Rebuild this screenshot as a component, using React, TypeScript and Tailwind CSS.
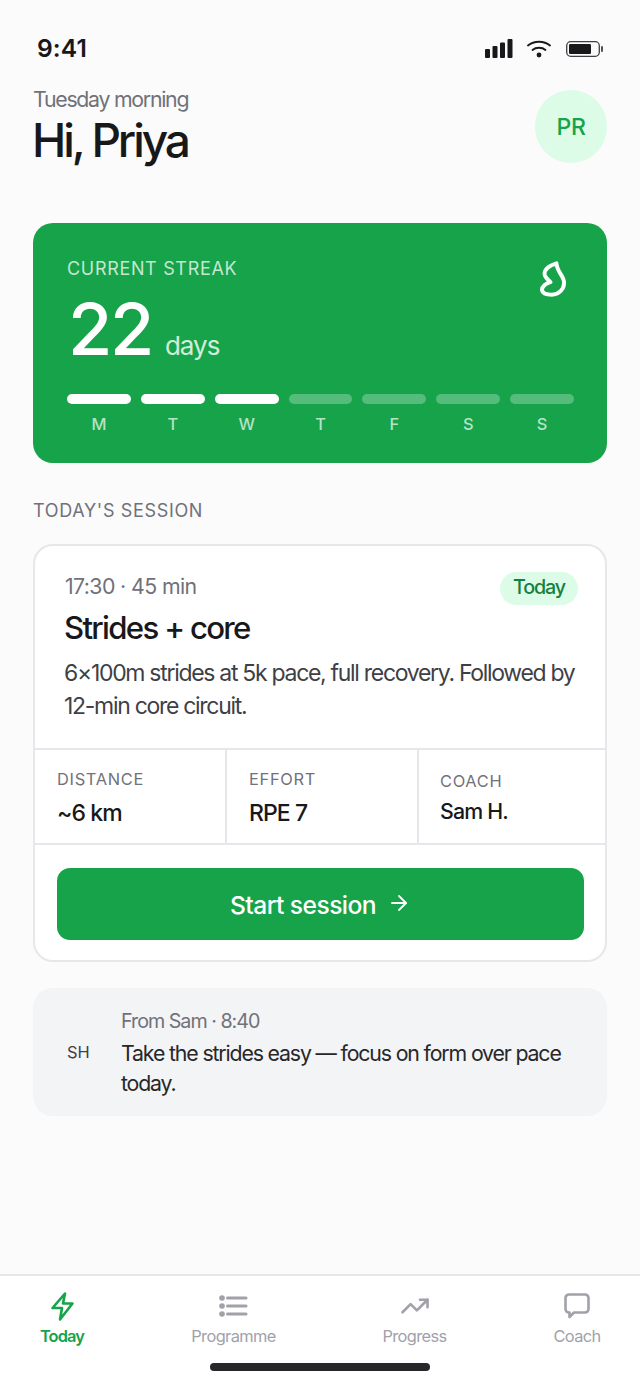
import { ArrowRight, TrendingUp } from "lucide-react";

const days = ["M", "T", "W", "T", "F", "S", "S"];

function Stat({ label, value, className, valueClass }: { label: string; value: string; className: string; valueClass: string }) {
  return (
    <div className={className}>
      <div className="text-[16.4px] leading-[20px] tracking-[0.7px] text-[#71717a]">{label}</div>
      <div className={valueClass}>{value}</div>
    </div>
  );
}

function Tab({ label, active, icon, className }: { label: string; active?: boolean; icon: React.ReactNode; className: string }) {
  return (
    <div className={`flex flex-col items-center ${className} ${active ? "text-[#16a34a]" : "text-[#a1a1aa]"}`}>
      <div className="flex h-[32px] items-center justify-center">{icon}</div>
      <div className={`mt-[4px] text-[16.4px] leading-[20px] whitespace-nowrap ${active ? "font-semibold tracking-[-0.9px]" : "font-normal tracking-[-0.6px]"}`}>{label}</div>
    </div>
  );
}

export default function App() {
  return (
    <div className="flex h-[1385px] w-[640px] flex-col overflow-hidden bg-[#fafbfa] font-['Inter',sans-serif]">
      <div className="flex h-[90px] items-start justify-between pt-[33px] pr-[37px] pl-[37px]">
        <span className="text-[24.6px] leading-[30px] font-semibold tracking-[0.1px] text-[#18181b]">9:41</span>
        <div className="mt-[6px] flex items-center">
          <svg width="28" height="19" viewBox="0 0 28 19" fill="#18181b">
            <rect x="0" y="10" width="5" height="9" rx="1" />
            <rect x="7.5" y="7" width="5" height="12" rx="1" />
            <rect x="15" y="3.5" width="5" height="15.5" rx="1" />
            <rect x="22.5" y="0" width="5" height="19" rx="1" />
          </svg>
          <svg width="24" height="18" viewBox="0 0 24 18" fill="none" stroke="#18181b" strokeWidth="1.8" strokeLinecap="round" className="ml-[14px]">
            <path d="M1 5.5C7 0.5 17 0.5 23 5.5" />
            <path d="M5.5 10C9 7 15 7 18.5 10" />
            <circle cx="12" cy="15" r="2.4" fill="#18181b" stroke="none" />
          </svg>
          <svg width="37" height="16" viewBox="0 0 37 16" fill="none" className="ml-[15px]">
            <rect x="0.7" y="0.7" width="32.6" height="14.6" rx="4" stroke="#3f3f46" strokeWidth="1.3" />
            <rect x="3" y="3" width="22" height="10" rx="1.2" fill="#18181b" />
            <rect x="35" y="5" width="2" height="6" rx="1" fill="#52525b" />
          </svg>
        </div>
      </div>

      <div className="flex h-[73px] items-center justify-between px-[33px]">
        <div className="-mt-[2px]">
          <div className="text-[21.3px] leading-[20px] tracking-[-1.27px] text-[#71717a]">Tuesday morning</div>
          <div className="mt-[8px] -ml-[1px] text-[46px] leading-[46px] font-medium tracking-[-3.05px] text-[#18181b]">Hi, Priya</div>
        </div>
        <div className="flex h-[73px] w-[72px] items-center justify-center rounded-full bg-[#dcfce7] pt-[1px] text-[23px] font-medium tracking-[-0.4px] text-[#16a34a]">PR</div>
      </div>

      <div className="mx-[33px] mt-[60px] h-[240px] rounded-[20px] bg-[#16a34a] pt-[36px] pr-[33px] pl-[34px]">
        <div className="flex items-start justify-between">
          <div>
            <div className="text-[18px] leading-[20px] tracking-[0.67px] text-white/75">CURRENT STREAK</div>
            <div className="mt-[18px] flex items-baseline">
              <span className="ml-[1px] text-[72px] leading-[64px] font-medium tracking-[-2.4px] text-white">22</span>
              <span className="ml-[13px] text-[26px] leading-[30px] tracking-[-1px] text-white/80">days</span>
            </div>
          </div>
          <svg width="33" height="42" viewBox="110 55 100 125" fill="none" stroke="white" strokeWidth="12" strokeLinecap="round" strokeLinejoin="round" className="-mt-[1px] mr-[4px]">
            <path d="M169 70C150 76 132 86 133 103C134 113 145 121 151 127C138 130 125 140 125 151C127 162 142 165 155 165C176 165 192 149 192 129C192 107 171 98 169 70Z" />
          </svg>
        </div>
        <div className="mt-[33px] grid grid-cols-7 gap-[10px]">
          {days.map((d, i) => (
            <div key={i} className="flex flex-col items-center">
              <div className={`h-[10px] w-full rounded-full ${i < 3 ? "bg-white" : "bg-white/[.27]"}`} />
              <div className="mt-[10px] text-[16.4px] leading-[20px] font-medium text-white/70">{d}</div>
            </div>
          ))}
        </div>
      </div>

      <div className="mx-[33px] mt-[38px] text-[18px] leading-[20px] tracking-[0.66px] text-[#71717a]">TODAY'S SESSION</div>

      <div className="mx-[33px] mt-[23px] h-[418px] rounded-[20px] border-2 border-[#e5e7eb] bg-white">
        <div className="h-[202px] pt-[25px] pr-[27px] pl-[29px]">
          <div className="flex items-center justify-between">
            <span className="mb-[4px] ml-[1px] text-[21.3px] leading-[30px] tracking-[-0.6px] text-[#71717a]">17:30 · 45 min</span>
            <span className="flex h-[33px] w-[78px] items-center justify-center rounded-full bg-[#dcfce7] text-[19.7px] font-medium tracking-[-1.1px] text-[#15803d]">Today</span>
          </div>
          <div className="mt-[3px] text-[31.2px] leading-[40px] font-medium tracking-[-1.7px] text-[#18181b]">Strides + core</div>
          <div className="mt-[9px] w-[530px] text-[23px] leading-[33px] tracking-[-1.3px] text-[#3f3f46]">6×100m strides at 5k pace, full recovery. Followed by 12-min core circuit.</div>
        </div>
        <div className="flex h-[97px] border-y-2 border-[#e5e7eb]">
          <Stat label="DISTANCE" value="~6 km" className="w-[192px] border-r-2 border-[#e5e7eb] pt-[19px] pl-[22px]" valueClass="mt-[10px] text-[23px] leading-[28px] font-[450] tracking-[-0.9px] text-[#18181b]" />
          <Stat label="EFFORT" value="RPE 7" className="w-[192px] border-r-2 border-[#e5e7eb] pt-[19px] pl-[22px]" valueClass="mt-[10px] text-[23px] leading-[28px] font-[450] tracking-[-0.9px] text-[#18181b]" />
          <Stat label="COACH" value="Sam H." className="flex-1 pt-[21px] pl-[21px]" valueClass="mt-[6px] text-[21.3px] leading-[28px] font-[450] tracking-[-0.8px] text-[#18181b]" />
        </div>
        <div className="pt-[23px] pr-[21px] pl-[22px]">
          <div className="flex h-[72px] items-center justify-center gap-[11px] rounded-[13px] bg-[#16a34a] pt-[2px] text-[24.6px] font-medium tracking-[-0.55px] text-white">
            Start session
            <ArrowRight size={24} strokeWidth={1.8} className="-mt-[4px]" />
          </div>
        </div>
      </div>

      <div className="mx-[33px] mt-[26px] flex h-[128px] items-center rounded-[20px] bg-[#f3f4f6] pr-[30px] pl-[34px]">
        <div className="w-[54px] shrink-0 text-[16.4px] text-[#3f3f46]">SH</div>
        <div className="pt-[1px]">
          <div className="text-[19.7px] leading-[28px] tracking-[-1px] text-[#71717a]">From Sam · 8:40</div>
          <div className="mt-[3px] text-[21.3px] leading-[30px] tracking-[-1.15px] text-[#27272a]">Take the strides easy — focus on form over pace today.</div>
        </div>
      </div>

      <div className="mt-auto h-[111px] border-t-2 border-[#e5e7eb] bg-white">
        <div className="flex pt-[14px]">
          <Tab
            label="Today"
            active
            className="ml-[40px] w-[44px]"
            icon={
              <svg width="25" height="32" viewBox="0 0 25 32" fill="none" stroke="currentColor" strokeWidth="2.6" strokeLinejoin="round">
                <path d="M15 3.5 2.5 18H12l-2 11.5L22.5 13.5H13Z" />
              </svg>
            }
          />
          <Tab
            label="Programme"
            className="ml-[108px] w-[83px]"
            icon={
              <svg width="30" height="24" viewBox="0 0 30 24" fill="currentColor" stroke="none">
                <circle cx="3" cy="4" r="2.8" />
                <circle cx="3" cy="12" r="2.8" />
                <circle cx="3" cy="20" r="2.8" />
                <rect x="7" y="2.5" width="21.5" height="3" rx="1.5" />
                <rect x="7" y="10.5" width="21.5" height="3" rx="1.5" />
                <rect x="7" y="18.5" width="21.5" height="3" rx="1.5" />
              </svg>
            }
          />
          <Tab label="Progress" className="ml-[108px] w-[63px]" icon={<TrendingUp size={30} strokeWidth={2.1} />} />
          <Tab
            label="Coach"
            className="ml-[108px] w-[46px]"
            icon={
              <svg width="26" height="26" viewBox="0 0 26 26" fill="none" stroke="currentColor" strokeWidth="2.6" strokeLinejoin="round">
                <path d="M5 1.5H21A3.5 3.5 0 0 1 24.5 5V16A3.5 3.5 0 0 1 21 19.5H10L5.5 24V19.5H5A3.5 3.5 0 0 1 1.5 16V5A3.5 3.5 0 0 1 5 1.5Z" />
              </svg>
            }
          />
        </div>
        <div className="mx-auto mt-[17px] h-[8px] w-[220px] rounded-full bg-[#27272a]" />
      </div>
    </div>
  );
}
